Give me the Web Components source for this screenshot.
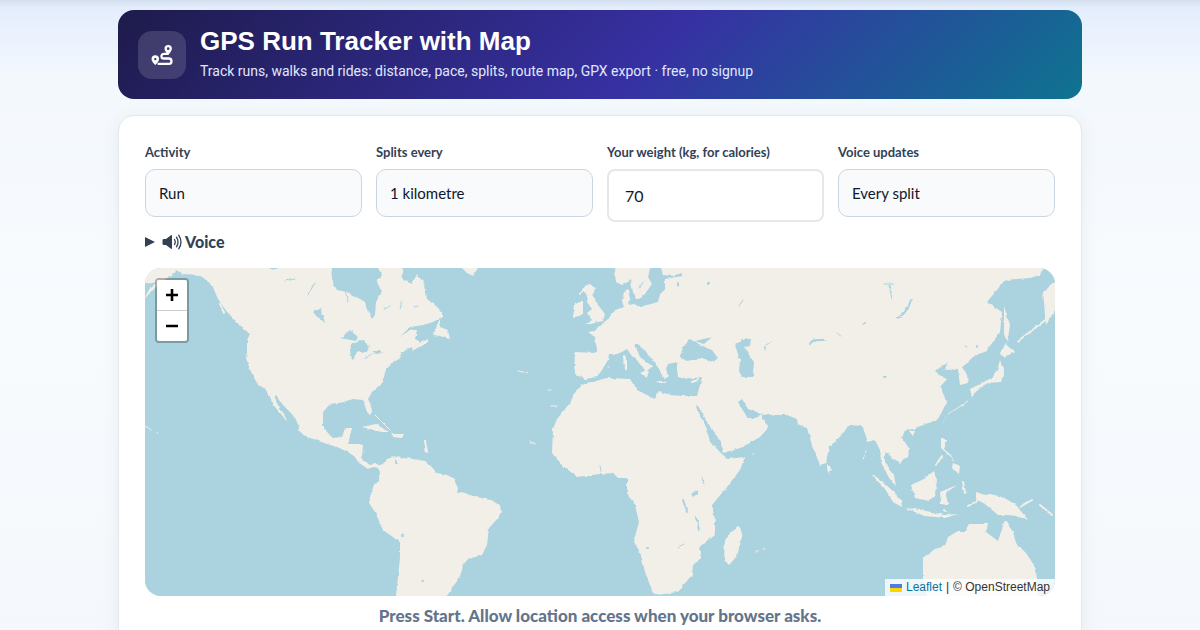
<!DOCTYPE html>
<html lang="en">
<head>
<meta charset="utf-8">
<meta name="viewport" content="width=device-width, initial-scale=1">
<title>GPS Run Tracker with Map</title>
<style>
  html { scrollbar-width: none; }
  body {
    margin: 0;
    font-family: Lato, "Open Sans", sans-serif;
    color: #0f172a;
    background: linear-gradient(180deg, #d3dff0 0, #e4edfc 8px, #e9f1fd 30px, #f3f8fd 75px, #f8fbfe 300px, #f4f8fc 100%);
  }
</style>
</head>
<body>
<tracker-page>
  <tracker-hero slot="hero">
    <span slot="title">GPS Run Tracker with Map</span>
    <span slot="subtitle">Track runs, walks and rides: distance, pace, splits, route map, GPX export · free, no signup</span>
  </tracker-hero>
  <tracker-card>
    <settings-grid>
      <select-field label="Activity" options="Run,Walk,Ride"></select-field>
      <select-field label="Splits every" options="1 kilometre,1 mile"></select-field>
      <number-field label="Your weight (kg, for calories)" value="70"></number-field>
      <select-field label="Voice updates" options="Every split,Off"></select-field>
    </settings-grid>
    <voice-panel>Voice</voice-panel>
    <route-map></route-map>
    <status-line>Press Start. Allow location access when your browser asks.</status-line>
  </tracker-card>
</tracker-page>

<script>
const define = (name, html, setup) => customElements.define(name, class extends HTMLElement {
  connectedCallback() {
    if (this.shadowRoot) return;
    const template = document.createElement('template');
    template.innerHTML = html;
    this.attachShadow({ mode: 'open' }).append(template.content.cloneNode(true));
    if (setup) setup(this, this.shadowRoot);
  }
});

define('tracker-page', `
  <style>
    :host { display: block; padding: 10px 16px 0; }
    main { display: flex; flex-direction: column; gap: 16px; max-width: 964px; margin: 0 auto; }
  </style>
  <main><slot name="hero"></slot><slot></slot></main>`);

define('tracker-hero', `
  <style>
    :host { display: block; }
    header {
      display: flex; align-items: center; gap: 14px; padding: 14px 20px; min-height: 61px;
      border-radius: 16px; color: #fff;
      background: linear-gradient(135deg, #1e1b4b 0%, #3730a3 55%, #0e7490 100%);
    }
    .badge {
      display: grid; place-items: center; flex: none; width: 48px; height: 48px;
      border-radius: 14px; background: rgba(255,255,255,.14);
    }
    svg { display: block; width: 22px; height: 22px; }
    h1 { margin: 0 0 4px; font: 700 26px/32px "Liberation Sans", Arial, sans-serif; }
    p { margin: 0 0 3px; font-family: Roboto, Lato, sans-serif; font-size: 14px; line-height: 20px; color: #e0e7ff; }
  </style>
  <header>
    <div class="badge">
      <svg viewBox="0 0 22 22" fill="none" stroke="#fff" aria-hidden="true">
        <path d="M16.6 9.8H12.8a2.3 2.3 0 0 0 0 4.7h5a2.7 2.7 0 0 1 0 5.4H7.6" stroke-width="2.3" stroke-linecap="round"/>
        <path fill="#fff" fill-rule="evenodd" stroke="none" d="M17.2.9a3.7 3.7 0 0 1 3.7 3.7c0 2.2-2 4.6-3.7 6.3-1.700-1.700-3.700-4.100-3.700-6.300A3.700 3.700 0 0 1 17.200.900zm0 2.400a1.400 1.400 0 1 0 0 2.800 1.400 1.400 0 0 0 0-2.800z"/>
        <path fill="#fff" fill-rule="evenodd" stroke="none" d="M4.300 11.200A3.800 3.800 0 0 1 8.100 15c0 2-2.100 4.500-3.800 6.100C2.600 19.500.500 17 .500 15a3.800 3.800 0 0 1 3.800-3.800zm0 2.700a1.200 1.200 0 1 0 0 2.400 1.200 1.200 0 0 0 0-2.400z"/>
      </svg>
    </div>
    <div><h1><slot name="title"></slot></h1><p><slot name="subtitle"></slot></p></div>
  </header>`);

define('tracker-card', `
  <style>
    :host {
      display: block; padding: 26px 26px 30px; background: #fff;
      border: 1px solid #e2e8f0; border-radius: 16px; box-sizing: border-box;
      box-shadow: 0 4px 20px rgba(15,23,42,.06);
    }
  </style>
  <slot></slot>`);

define('settings-grid', `
  <style>
    :host { display: grid; grid-template-columns: repeat(auto-fit, minmax(180px, 1fr)); gap: 14px; align-items: start; }
  </style>
  <slot></slot>`);

const fieldBase = `
  :host { display: flex; flex-direction: column; gap: 6px; min-width: 0; }
  label { font-size: 13px; line-height: 21px; font-weight: 700; color: #334155; }
  select, input {
    appearance: none; box-sizing: border-box; width: 100%; margin: 0;
    color: #0f172a; font-family: inherit; outline: none;
  }`;

define('select-field', `
  <style>${fieldBase}
    select {
      height: 48px; padding: 0 13px; font-size: 15px; line-height: 24px;
      background: #f8fafc; border: 1px solid #cbd5e1; border-radius: 10px;
    }
  </style>
  <label for="control"></label><select id="control"></select>`, (host, root) => {
  root.querySelector('label').textContent = host.getAttribute('label');
  for (const text of host.getAttribute('options').split(',')) root.querySelector('select').add(new Option(text));
});

define('number-field', `
  <style>${fieldBase}
    input {
      height: 53px; padding: 0 16px; font-size: 16px;
      background: #fff; border: 2px solid #e5e7eb; border-radius: 8px;
    }
  </style>
  <label for="control"></label><input id="control" inputmode="decimal">`, (host, root) => {
  root.querySelector('label').textContent = host.getAttribute('label');
  root.querySelector('input').value = host.getAttribute('value');
});

define('voice-panel', `
  <style>
    :host { display: block; margin: 8px 0 14px; color: #334155; }
    summary { display: flex; align-items: center; gap: 2px; list-style: none; font-size: 16px; line-height: 24px; font-weight: 900; }
    summary::before {
      content: ""; margin-right: 5px; border-left: 10px solid; border-top: 5px solid transparent; border-bottom: 5px solid transparent;
    }
    svg { width: 21px; height: 16px; }
  </style>
  <details><summary>
    <svg viewBox="0 0 21 16" fill="none" stroke="currentColor" aria-hidden="true">
      <path d="M.5 6.200Q.500 5 2 5H4L9 1.200Q10 .600 10 2V14Q10 15.400 9 14.800L4 11H2Q.500 11 .500 9.800Z" fill="currentColor" stroke="none"/>
      <path d="M12.500 5.500q1.500 2.500 0 5M14.500 3.200q3 4.800 0 9.600M16.700 1.200q4.600 6.800 0 13.600" stroke-width="1.300" stroke-linecap="round"/>
    </svg>
    <slot></slot>
  </summary></details>`);

define('status-line', `
  <style>
    :host { display: block; margin-top: 8px; text-align: center; font-size: 17px; line-height: 24px; font-weight: 900; color: #64748b; }
  </style>
  <slot></slot>`);

define('route-map', `
  <style>
    :host { display: grid; height: 328px; border-radius: 16px; overflow: hidden; background: #aad3df; position: relative; }
    .world { display: block; width: 100%; height: 328px; }
    .land { fill: #f2efe9; }
    .water { fill: #aad3df; }
    .river { fill: none; stroke: #aad3df; stroke-linecap: round; stroke-linejoin: round; }
    .isle { fill: none; stroke: #f2efe9; stroke-linecap: round; stroke-linejoin: round; }
    .zoom {
      position: absolute; left: 10px; top: 10px; display: flex; flex-direction: column;
      border: 2px solid rgba(0,0,0,.27); border-radius: 4px; background-clip: padding-box;
    }
    button {
      box-sizing: border-box; width: 30px; height: 30px; padding: 0; border: 0; background: #fff; color: #000;
      display: grid; place-items: center; border-radius: 0 0 2px 2px;
    }
    button:first-child { height: 31px; border-bottom: 1px solid #ccc; border-radius: 2px 2px 0 0; }
    button svg { width: 16px; height: 16px; }
    .credit {
      position: absolute; right: 0; bottom: 0; display: flex; align-items: center; gap: 4px; padding: 0 5px;
      font: 12px/17px "Liberation Sans", Arial, sans-serif; color: #333; background: rgba(255,255,255,.8);
    }
    .credit svg { width: 12px; height: 8px; }
    a { color: #0078a8; text-decoration: none; }
  </style>
  <svg class="world" viewBox="145 268 910 328" preserveAspectRatio="xMidYMid slice" role="img" aria-label="World map">
    <defs>
      <filter id="coast" x="0" y="0" width="1" height="1">
        <feTurbulence type="fractalNoise" baseFrequency=".18" numOctaves="2" seed="4"/>
        <feDisplacementMap in="SourceGraphic" scale="3" xChannelSelector="R" yChannelSelector="G"/>
      </filter>
    </defs>
    <g filter="url(#coast)">
      <rect x="135" y="258" width="930" height="348" fill="#aad3df"/>
      <g class="land">
        <path d="M135 258H332V268L331 279 337 290 347 292 360 299 365 302 367 309 372 319 375 315 376 302 382 292 377 282 382 275 378 268V258H402V268L403 280 412 284 417 274 425 285 427 299 435 305 442 312 442 317 433 322 423 325 410 327 400 337 410 330 417 330 415 339 420 343 428 339 428 342 412 351 412 347 402 352 398 360 392 362 385 372 383 382 372 392 368 399 371 405 372 412 370 415 367 412 363 400 353 399 343 402 330 404 323 412 323 425 327 432 333 438 342 437 345 428 352 428 349 440 348 444 358 444 363 445 362 455 363 460 370 465 375 463 381 466 387 459 396 456 395 460 398 456 402 458 413 459 425 461 430 465 437 473 447 475 453 478 458 488 457 493 462 492 473 496 490 500 500 505 501 512 498 518 489 528 487 545 482 555 468 559 463 565 460 577 452 588 447 596V610H396V596L400 558 400 542 383 530 375 512 369 503 370 497 373 488 379 480 380 472 378 468 373 467 368 469 358 462 355 457 348 452 337 447 327 444 310 438 300 432 298 424 292 414 283 405 277 396 274 395 275 399 280 409 285 415 287 422 282 415 275 407 270 397 266 389 258 385 252 374 246 359 247 352 247 340 250 334 237 322 227 312 218 299 212 285 200 275 183 274 176 270 172 276 167 278 160 283 145 298 135 305Z"/>
        <path d="M462 258V268L467 273 473 276 478 268V258ZM432 335 440 319 440 327 448 330 450 339 440 336Z"/>
        <path d="M614 258V268L616 282 622 285 628 282 630 279 633 292 637 299 642 298 647 291 652 284 648 277 650 268V258H661V268L663 275 672 276 682 273 682 276 665 279 665 290 660 294 658 302 640 307 634 304 629 305 630 299 628 289 624 292 622 301 624 307 615 310 608 319 598 327 595 331 588 332 595 337 597 349 595 353 575 352 574 375 582 377 585 379 597 377 602 370 608 360 609 354 618 354 627 349 632 356 640 363 646 372 648 370 652 366 640 357 635 345 640 345 647 354 655 362 662 375 665 379 669 376 666 369 668 364 677 362 677 369 678 377 687 379 702 377 700 385 697 396 683 396 670 395 658 391 655 399 637 390 630 379 607 378 587 383 582 385 573 395 570 404 557 419 553 429 552 453 562 465 577 477 600 474 613 473 618 478 627 478 627 493 635 505 639 522 634 540 641 555 645 572 653 593 658 595 677 592 692 575 693 565 701 558 699 548 715 535 715 520 712 505 727 487 740 470 745 457 727 459 720 452 710 442 707 429 695 405 698 406 712 430 720 440 724 453 743 447 760 437 769 427 762 419 762 414 753 419 747 417 738 402 742 399 748 409 760 413 767 415 787 415 797 419 798 425 807 428 812 445 820 465 826 463 829 447 842 435 848 426 862 425 868 442 875 440 880 450 881 462 887 475 896 487 894 475 885 462 885 452 892 457 900 463 908 457 909 448 902 438 905 430 913 429 938 419 947 402 940 387 947 379 942 377 935 371 947 363 945 370 958 369 960 385 968 383 967 375 963 367 973 357 987 350 1000 332 1002 312 987 302 1005 280 1030 278 1040 275 1045 266V258Z"/>
        <path d="M1065 275 1055 282 1043 292 1046 325 1055 310 1065 305ZM582 289 590 284 595 288 593 295 598 305 605 314 603 321 585 325 592 320 587 313 592 309 587 302 588 297ZM574 304 583 301 583 314 573 318ZM738 525 743 533 737 556 729 565 724 560 725 540Z"/>
        <path d="M871 474 878 478 892 490 901 500 902 507 893 502 885 489ZM911 485 922 480 934 471 937 480 935 495 929 501 915 498ZM905 508 922 510 944 515 958 514 945 518 925 516ZM940 492 957 485 946 493 948 505 941 504ZM976 492 985 495 990 494 1003 497 1016 505 1028 520 1016 516 1008 515 998 515 985 504 976 499ZM923 579 923 558 935 549 945 546 948 537 958 531 965 531 969 524 988 524 986 532 998 541 1005 520 1013 532 1016 543 1026 553 1036 568 1037 585 1040 610H930Z"/>
        <path d="M1006 343 1014 352 1004 358 1000 354ZM1000 360 1004 372 1001 382 988 383 979 388 972 397 970 389 980 384 993 377 998 367ZM1004 306 1010 325 1007 342 1004 334ZM946 413 942 427 944 421ZM941 437 947 441 944 449 951 455 955 463 950 456 941 448ZM953 463 960 466 959 474 952 468ZM827 464 832 470 829 473 827 470ZM909 431 915 431 913 436ZM644 371 649 371 647 377 640 373ZM623 356 627 357 627 369 624 369ZM362 427 376 424 389 432 381 432ZM391 434 404 434 402 438 393 437Z"/>
      </g>
      <g class="water">
        <path d="M680 357 683 347 690 339 695 342 701 345 712 350 718 358 713 362 702 358 687 361ZM695 341 712 337 704 344ZM735 345 743 339 751 339 750 346 744 347 754 362 753 377 742 377 739 371 740 360ZM691 494 697 490 697 494 693 497Z"/>
        <path d="M340 338 350 330 358 337 356 341ZM351 344 363 340 370 347 366 353 357 352 353 359 350 356ZM313 312 320 307 325 322 319 319ZM363 359 373 354 376 352 365 357ZM372 351 383 351 377 354ZM158 282 150 288 145 297 145 284ZM270 258H277V269H270Z"/>
      </g>
      <g class="river">
        <path stroke-width="2" d="M897 318C902 317 909 308 911 300M810 344C812 339 819 340 824 340M683 500 687 512M696 517 699 530"/>
        <path stroke-width="1" d="M704 484 702 478M678 548 684 544M285 281 295 279M315 283 308 294M345 290 348 302M384 310 390 306M400 308 402 301M414 307 418 306M765 350 766 345 772 341M739 306 743 300M837 333 841 336M889 285 892 299M639 288 643 282M653 290 656 285M884 284 893 284M965 346 967 347M600 466 601 471"/>
        <path stroke-width="2" d="M708 283h1M678 283v2M864 323h1M396 462v1M402 535h1M422 581h1M884 377h1M977 346v1M647 548h1"/>
      </g>
      <g class="isle">
        <path stroke-width="2" d="M220 304 224 313M237 321 247 330M425 441 427 452M936 465 942 456M944 510 946 511M968 506 978 500M963 482 965 493M1020 507 1032 500M1040 505 1052 515M1018 341 1048 318M659 382h6M692 382l6-2M407 299 409 300M583 290 580 294"/>
        <path stroke-width="1" d="M145 426 152 430M157 433h1M518 371 528 373M551 406h6M549 390h2M752 454h2M757 551h2M763 549h2M530 442l5 2M948 415 969 400M608 367h1M375 415 390 430M863 460 865 451"/>
      </g>
    </g>
  </svg>
  <div class="zoom">
    <button type="button" aria-label="Zoom in"><svg viewBox="0 0 16 16"><path d="M8 2v12M2 8h12" stroke="#000" stroke-width="2.600"/></svg></button>
    <button type="button" aria-label="Zoom out"><svg viewBox="0 0 16 16"><path d="M2 8h12" stroke="#000" stroke-width="2.600"/></svg></button>
  </div>
  <div class="credit">
    <svg viewBox="0 0 12 8" aria-hidden="true"><path fill="#4c7be1" d="M0 0h12v4H0z"/><path fill="#ffd500" d="M0 4h12v4H0z"/></svg>
    <a href="https://leafletjs.com">Leaflet</a><span>|</span><span>© OpenStreetMap</span>
  </div>`);
</script>
</body>
</html>
